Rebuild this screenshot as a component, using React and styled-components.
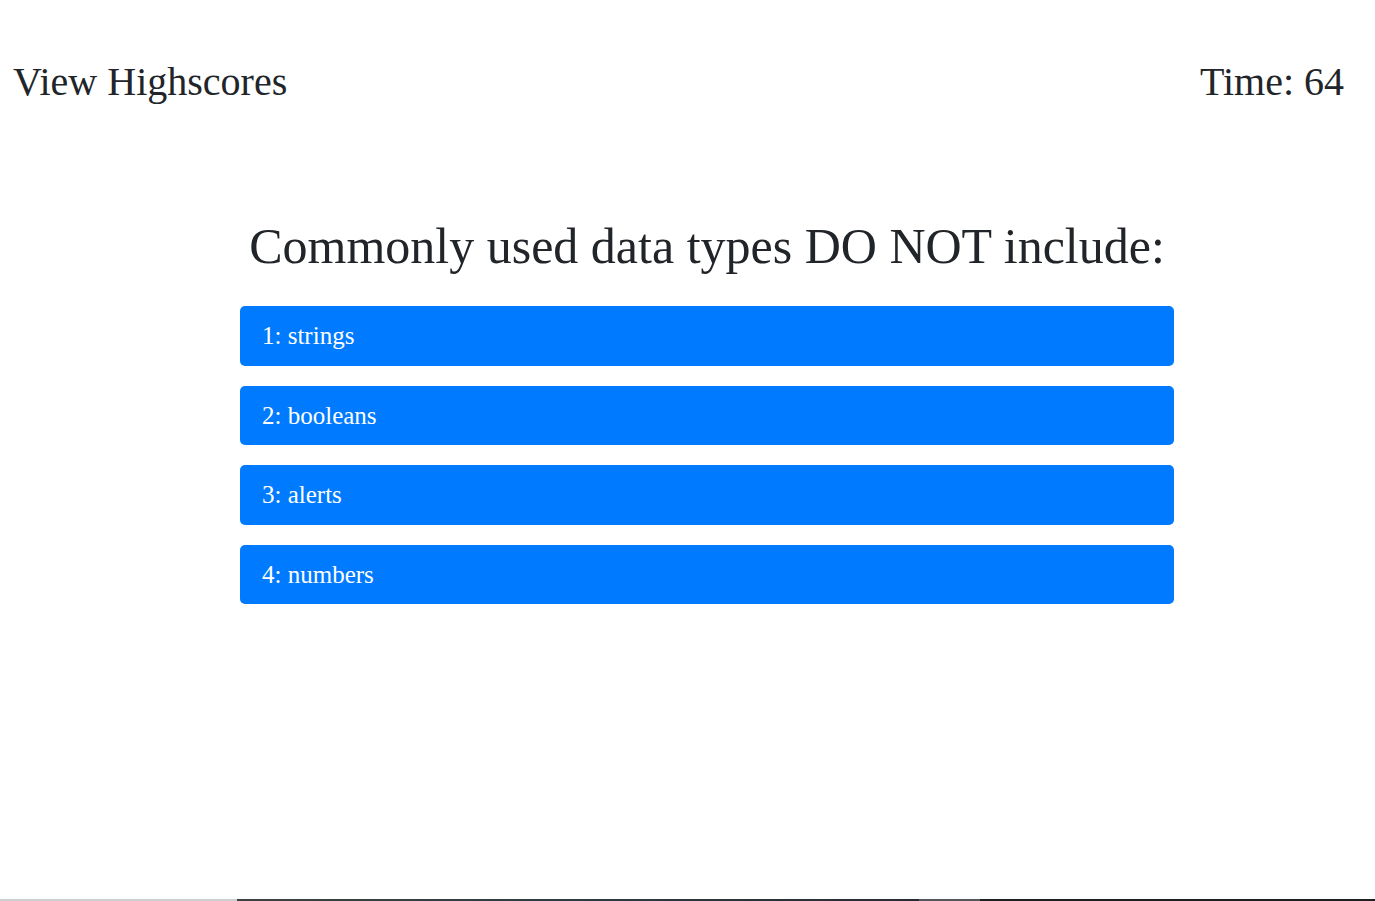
import React from "react";
import styled, { createGlobalStyle } from "styled-components";

const Global = createGlobalStyle`
  html, body { margin: 0; padding: 0; background: #fff; }
  body {
    font-family: "Liberation Serif", "Times New Roman", serif;
    color: #212529;
  }
`;

const Page = styled.div`
  display: flex;
  flex-direction: column;
  height: 901px;
  overflow: hidden;
`;

const Header = styled.header`
  display: flex;
  justify-content: space-between;
  align-items: center;
  padding: 0 31px 0 13px;
  margin-top: 58px;
`;

const HeaderText = styled.div`
  font-size: 40px;
  line-height: 48px;
  color: #212529;
`;

const Main = styled.main`
  flex: 1;
  padding-left: 39px;
`;

const Quiz = styled.section`
  width: 934px;
  margin: 110px auto 0;
`;

const Question = styled.h1`
  margin: 0 0 30px;
  font-weight: 400;
  font-size: 50px;
  line-height: 60px;
  text-align: center;
  color: #212529;
`;

const Choices = styled.div`
  display: flex;
  flex-direction: column;
  gap: 20px;
`;

const Choice = styled.button`
  display: flex;
  align-items: center;
  height: 59.5px;
  padding: 1px 22px 0;
  border: none;
  border-radius: 5px;
  background: #007bff;
  color: #fff;
  font-family: "Liberation Serif", "Times New Roman", serif;
  font-size: 25px;
  text-align: left;
  cursor: pointer;
`;

const Strip = styled.div`
  height: 2px;
  background: linear-gradient(
    to right,
    #cfcfcf 0,
    #cfcfcf 237px,
    #3d413f 237px,
    #2f3c44 560px,
    #2a2a33 919px,
    #56575d 919px,
    #56575d 980px,
    #1f1f23 980px,
    #1f1f23 100%
  );
`;

const choices = ["1: strings", "2: booleans", "3: alerts", "4: numbers"];

export default function App() {
  return (
    <Page>
      <Global />
      <Header>
        <HeaderText>View Highscores</HeaderText>
        <HeaderText>Time: 64</HeaderText>
      </Header>
      <Main>
        <Quiz>
          <Question>Commonly used data types DO NOT include:</Question>
          <Choices>
            {choices.map((c) => (
              <Choice key={c}>{c}</Choice>
            ))}
          </Choices>
        </Quiz>
      </Main>
      <Strip />
    </Page>
  );
}
